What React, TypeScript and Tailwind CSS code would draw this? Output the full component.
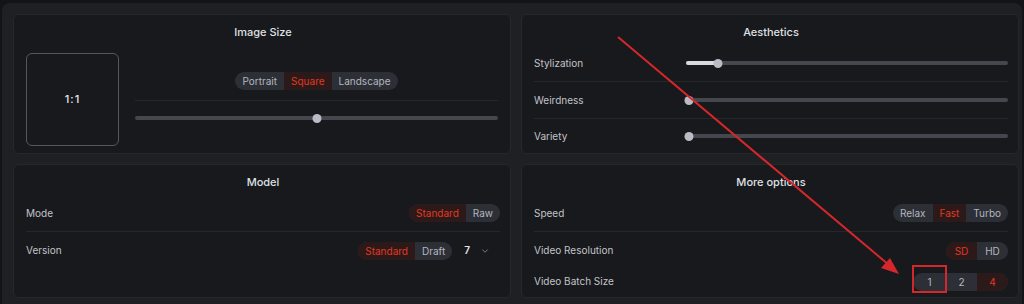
import { ChevronDown } from "lucide-react";

type Seg = { label: string; active?: boolean; w?: string };

function Segmented({ items }: { items: Seg[] }) {
  return (
    <div className="flex h-[18px] overflow-hidden rounded-full bg-[#2d2f37] text-[10px] leading-[18px]">
      {items.map((it) => (
        <div
          key={it.label}
          className={`flex items-center justify-center ${it.w ?? "px-[7px]"} ${
            it.active ? "bg-[#2c1a1b] text-[#e2381e]" : "text-[#b4b6be]"
          }`}
        >
          {it.label}
        </div>
      ))}
    </div>
  );
}

function Slider({ value, fill }: { value: number; fill?: boolean }) {
  return (
    <div className="relative h-[10px] w-full">
      <div className="absolute left-0 right-0 top-[3px] h-[4px] rounded-full bg-[#45474f]" />
      {fill && (
        <div
          className="absolute left-0 top-[3px] h-[4px] rounded-full bg-[#d9dade]"
          style={{ width: `${value}%` }}
        />
      )}
      <div
        className="absolute top-[1px] h-[9px] w-[9px] -translate-x-1/2 rounded-full bg-[#b9bbc5]"
        style={{ left: `${value}%` }}
      />
    </div>
  );
}

function Card({ title, children }: { title: string; children: React.ReactNode }) {
  return (
    <div className="rounded-md border border-[#26272c] bg-[#18191d] pl-[12px] pr-[10px] pt-[10px]">
      <h2 className="text-center text-[11px] font-medium leading-[14px] text-[#dfe0e3]">{title}</h2>
      {children}
    </div>
  );
}

function Row({ label, children, h = "h-[37px]", line }: { label: string; children: React.ReactNode; h?: string; line?: boolean }) {
  return (
    <div className={`flex items-center ${h} ${line ? "border-b border-[#26272c]" : ""}`}>
      <span className="w-[152px] shrink-0 text-[10px] text-[#c2c3c8]">{label}</span>
      <div className="flex flex-1 items-center justify-end">{children}</div>
    </div>
  );
}

export default function App() {
  return (
    <div className="relative h-[304px] w-[1024px] overflow-hidden bg-[#131416] pl-[2px] pt-[3px] font-['Inter',sans-serif]">
      <div className="h-[310px] w-[1020px] rounded-lg bg-[#1f2024] pl-[11px] pr-[3px] pt-[11px]">
        <div className="grid grid-cols-2 gap-[10px]">
          <Card title="Image Size">
            <div className="mt-[14px] flex">
              <div className="flex h-[93px] w-[93px] shrink-0 items-center justify-center rounded-md border border-[#55575e] text-[11px] font-medium tracking-[1px] text-[#e4e5e8]">
                1:1
              </div>
              <div className="ml-[16px] mr-[2px] flex flex-1 flex-col pt-[19px]">
                <div className="flex justify-center">
                  <Segmented items={[{ label: "Portrait" }, { label: "Square", active: true }, { label: "Landscape" }]} />
                </div>
                <div className="mt-[10px] h-px bg-[#26272c]" />
                <div className="mt-[12px]">
                  <Slider value={50} />
                </div>
              </div>
            </div>
          </Card>

          <Card title="Aesthetics">
            <div className="mt-[6px]">
              <Row label="Stylization" line>
                <Slider value={10} fill />
              </Row>
              <Row label="Weirdness" line>
                <Slider value={1} />
              </Row>
              <Row label="Variety" h="h-[34px]">
                <Slider value={1} />
              </Row>
            </div>
          </Card>

          <Card title="Model">
            <div className="mt-[6px]">
              <Row label="Mode" line>
                <Segmented items={[{ label: "Standard", active: true }, { label: "Raw" }]} />
              </Row>
              <Row label="Version">
                <Segmented items={[{ label: "Standard", active: true }, { label: "Draft" }]} />
                <span className="ml-[12px] text-[10px] font-semibold text-[#e4e5e8]">7</span>
                <ChevronDown className="ml-[10px] mr-[10px] h-[10px] w-[10px] text-[#8a8c96]" strokeWidth={2} />
              </Row>
            </div>
          </Card>

          <Card title="More options">
            <div className="mt-[6px] pb-[3px]">
              <Row label="Speed" line>
                <Segmented items={[{ label: "Relax" }, { label: "Fast", active: true }, { label: "Turbo" }]} />
              </Row>
              <Row label="Video Resolution">
                <Segmented items={[{ label: "SD", active: true, w: "w-[31px]" }, { label: "HD", w: "w-[31px]" }]} />
              </Row>
              <Row label="Video Batch Size" h="h-[25px]">
                <Segmented
                  items={[
                    { label: "1", w: "w-[33px]" },
                    { label: "2", w: "w-[31px]" },
                    { label: "4", active: true, w: "w-[31px]" },
                  ]}
                />
              </Row>
            </div>
          </Card>
        </div>
      </div>

      {/* annotation overlay */}
      <svg className="pointer-events-none absolute left-0 top-0" width="1024" height="304">
        <line x1="618" y1="37" x2="889" y2="265" stroke="#d3272b" strokeWidth="2" />
        <polygon points="899,274 881,268 890,258" fill="#d3272b" />
        <rect x="913" y="266" width="33" height="26" fill="none" stroke="#d3272b" strokeWidth="2" />
      </svg>
    </div>
  );
}
